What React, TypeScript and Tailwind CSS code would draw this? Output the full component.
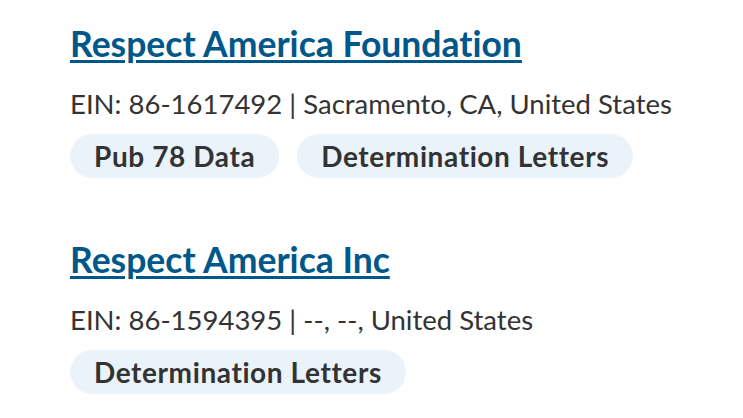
import React from "react";

interface Org {
  name: string;
  ein: string;
  location: string;
  tags: string[];
}

const orgs: Org[] = [
  {
    name: "Respect America Foundation",
    ein: "86-1617492",
    location: "Sacramento, CA, United States",
    tags: ["Pub 78 Data", "Determination Letters"],
  },
  {
    name: "Respect America Inc",
    ein: "86-1594395",
    location: "--, --, United States",
    tags: ["Determination Letters"],
  },
];

const App = () => {
  return (
    <div className="min-h-screen bg-white pl-[70px] pt-[22px] font-['Lato','Noto_Sans',sans-serif] text-[#333333] [font-variant-ligatures:none]">
      <div className="flex flex-col gap-[60px]">
        {orgs.map((org) => (
          <div key={org.ein}>
            {/* Name */}
            <h2 className="text-[35.5px] leading-[44px] font-bold">
              <a
                href="#"
                className="text-[#00578a] underline decoration-[2.5px] underline-offset-[3px]"
              >
                {org.name}
              </a>
            </h2>

            {/* EIN + location */}
            <p className="mt-[22px] text-[27.5px] leading-[32px]">
              EIN: {org.ein} | {org.location}
            </p>

            {/* Tags */}
            <div className="mt-[14px] flex gap-[18px]">
              {org.tags.map((t) => (
                <span
                  key={t}
                  className="rounded-full bg-[#eaf2fa] px-[24px] h-[44px] flex items-center text-[28px] font-bold tracking-[0.6px]"
                >
                  {t}
                </span>
              ))}
            </div>
          </div>
        ))}
      </div>
    </div>
  );
};

export default App;
